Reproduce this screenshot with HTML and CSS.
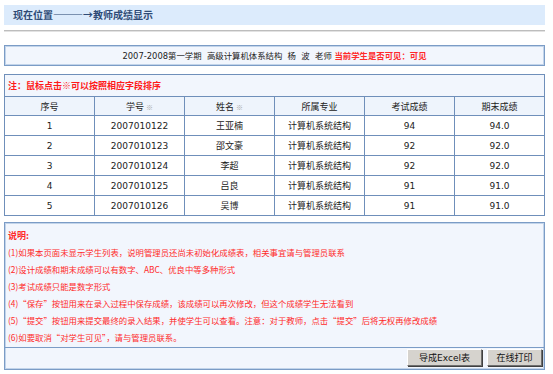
FILE: index.html
```html
<!DOCTYPE html>
<html lang="zh">
<head>
<meta charset="utf-8">
<link rel="stylesheet" href="styles.css">
</head>
<body>
<div class="page">
  <div class="crumb">现在位置———→教师成绩显示</div>
  <div class="rule"></div>
  <div class="info">2007-2008第一学期&nbsp;&nbsp;高级计算机体系结构&nbsp;&nbsp;杨&nbsp;&nbsp;波&nbsp;&nbsp;老师 <span class="vis">当前学生是否可见：可见</span></div>
  <table class="grid">
    <tr class="note"><td colspan="6">注：鼠标点击※可以按照相应字段排序</td></tr>
    <tr class="head">
      <th class="c1">序号</th>
      <th class="c2">学号 <span class="sort">※</span></th>
      <th class="c3">姓名 <span class="sort">※</span></th>
      <th class="c4">所属专业</th>
      <th class="c5">考试成绩</th>
      <th class="c6">期末成绩</th>
    </tr>
    <tr><td class="num">1</td><td class="num">2007010122</td><td>王亚楠</td><td>计算机系统结构</td><td class="num">94</td><td class="num">94.0</td></tr>
    <tr><td class="num">2</td><td class="num">2007010123</td><td>邵文豪</td><td>计算机系统结构</td><td class="num">92</td><td class="num">92.0</td></tr>
    <tr><td class="num">3</td><td class="num">2007010124</td><td>李超</td><td>计算机系统结构</td><td class="num">92</td><td class="num">92.0</td></tr>
    <tr><td class="num">4</td><td class="num">2007010125</td><td>吕良</td><td>计算机系统结构</td><td class="num">91</td><td class="num">91.0</td></tr>
    <tr><td class="num">5</td><td class="num">2007010126</td><td>吴博</td><td>计算机系统结构</td><td class="num">91</td><td class="num">91.0</td></tr>
  </table>
  <div class="explain">
    <div class="lines">
      <div class="title">说明:</div>
      <div>(1)如果本页面未显示学生列表，说明管理员还尚未初始化成绩表，相关事宜请与管理员联系</div>
      <div>(2)设计成绩和期末成绩可以有数字、ABC、优良中等多种形式</div>
      <div>(3)考试成绩只能是数字形式</div>
      <div>(4)“保存”按钮用来在录入过程中保存成绩，该成绩可以再次修改，但这个成绩学生无法看到</div>
      <div>(5)“提交”按钮用来提交最终的录入结果，并使学生可以查看。注意：对于教师，点击“提交”后将无权再修改成绩</div>
      <div>(6)如要取消“对学生可见”，请与管理员联系。</div>
    </div>
    <div class="actions">
      <button class="btn excel">导成Excel表</button>
      <button class="btn print">在线打印</button>
    </div>
  </div>
</div>
</body>
</html>
```

FILE: styles.css
```css
html, body {
  margin: 0;
  padding: 0;
  background: #ffffff;
}
body {
  font-family: "DejaVu Sans", "Noto Sans CJK SC", sans-serif;
  font-size: 9px;
  color: #222;
}
.page {
  width: 541px;
  padding: 5px 4px 0 4px;
}
.crumb {
  height: 20px;
  line-height: 20px;
  background: #dcebfc;
  padding-left: 9px;
  font-family: "Noto Sans CJK SC", sans-serif;
  font-weight: bold;
  font-size: 10px;
  color: #2f4b76;
}
.rule {
  margin-top: 5px;
  height: 0;
  border-top: 1px solid #bdbdbd;
  border-bottom: 1px solid #e2e2e2;
}
.info {
  margin-top: 13px;
  height: 19px;
  line-height: 19px;
  border: 1px solid #7b9cc6;
  box-shadow: inset 0 0 0 1px #c2d4ea;
  background: #f2f6fd;
  text-align: center;
  font-size: 8.4px;
  font-family: "DejaVu Sans", "Noto Sans CJK SC", sans-serif;
  color: #222;
}
.vis {
  color: #ff2a2a;
  font-weight: bold;
  font-family: "Noto Sans CJK SC", sans-serif;
}
.grid {
  margin-top: 8px;
  width: 541px;
  border-collapse: collapse;
  table-layout: fixed;
  border: 1px solid #6f8fba;
}
.grid td, .grid th {
  border: 1px solid #6f8fba;
  text-align: center;
  padding: 0;
  height: 19px;
  font-weight: normal;
  font-family: "Noto Sans CJK SC", sans-serif;
  color: #222;
}
.grid td.num {
  font-family: "DejaVu Sans", sans-serif;
}
.grid .note td {
  height: 21px;
  text-align: left;
  padding-left: 3px;
  background: #f2f6fd;
  color: #ff1a1a;
  font-weight: bold;
}
.grid .head th {
  height: 18px;
  background: #eef4fc;
}
.c1 { width: 93px; }
.c2 { width: 86px; }
.c3 { width: 86px; }
.c4 { width: 93px; }
.c5 { width: 91px; }
.c6 { width: 92px; }
.sort {
  color: #a8a8a8;
  font-size: 7px;
}
.explain {
  margin-top: 6px;
  border: 1px solid #7b9cc6;
  box-shadow: inset 0 0 0 1px #c2d4ea;
  background: #f2f6fd;
}
.lines {
  padding: 4px 0 1px 3px;
  line-height: 17px;
  font-size: 8.4px;
  color: #ff2a2a;
  font-family: "Noto Sans CJK SC", sans-serif;
}
.title {
  font-weight: bold;
  font-size: 9px;
}
.actions {
  border-top: 1px solid #7b9cc6;
  display: flex;
  justify-content: flex-end;
  gap: 5px;
  padding: 1px 2px 3px 0;
}
.btn {
  height: 17px;
  padding: 0;
  margin: 0;
  background: #d6d3ce;
  border: 1px solid;
  border-color: #ffffff #6f6f6f #6f6f6f #ffffff;
  box-shadow: 1px 1px 0 #404040;
  font-family: "DejaVu Sans", "Noto Sans CJK SC", sans-serif;
  font-size: 9px;
  color: #111;
}
.excel { width: 75px; }
.print { width: 55px; }
```
